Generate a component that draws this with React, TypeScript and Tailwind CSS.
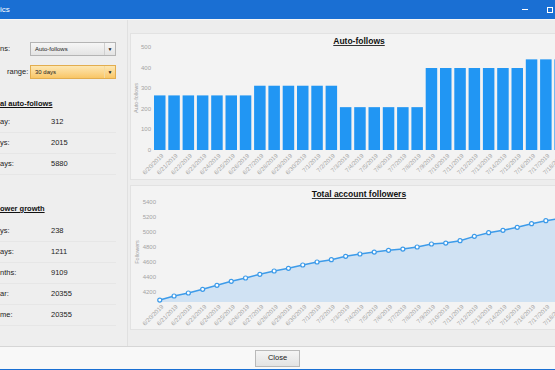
import React from "react";

const dates: string[] = [];
for (let d = 20; d <= 30; d++) dates.push(`6/${d}/2019`);
for (let d = 1; d <= 19; d++) dates.push(`7/${d}/2019`);

const autoFollows = [
  265, 265, 265, 265, 265, 265, 265, 312, 312, 312, 312, 312, 312, 208, 208, 208, 208, 208, 208, 398, 398, 398,
  398, 398, 398, 398, 440, 440, 440, 440,
];

const followers = [
  4093, 4147, 4187, 4236, 4289, 4343, 4387, 4436, 4480, 4516, 4560, 4600, 4631, 4676, 4707, 4733, 4756, 4773, 4800,
  4840, 4853, 4884, 4942, 4991, 5022, 5062, 5111, 5151, 5180, 5205,
];

const PITCH = 14.3;
const cx = (i: number) => 28.75 + i * PITCH;

function XLabels({ y }: { y: number }) {
  return (
    <g fill="#a3a3a3" fontSize="6">
      {dates.map((d, i) => (
        <text key={d} transform={`translate(${cx(i) + 3},${y}) rotate(-45)`} textAnchor="end" dominantBaseline="middle">
          {d}
        </text>
      ))}
    </g>
  );
}

function AutoFollowsChart() {
  const base = 116;
  const k = 0.206;
  return (
    <svg width="456" height="147" className="block font-['Liberation_Sans',Arial,sans-serif]">
      <text x="228" y="10" textAnchor="middle" fontSize="8.5" fontWeight="bold" fill="#111" textDecoration="underline">
        Auto-follows
      </text>
      <g fill="#a3a3a3" fontSize="6">
        {[0, 100, 200, 300, 400, 500].map((v) => (
          <text key={v} x="20" y={base - v * k} textAnchor="end" dominantBaseline="central">
            {v}
          </text>
        ))}
        <text transform="translate(7,64) rotate(-90)" textAnchor="middle" fontSize="5.5">
          Auto-follows
        </text>
      </g>
      {autoFollows.map((v, i) => (
        <rect key={i} x={23 + i * PITCH} y={base - v * k} width="11.5" height={v * k} fill="#2196f3" />
      ))}
      <XLabels y={121} />
    </svg>
  );
}

function FollowersChart() {
  const bottom = 116;
  const yOf = (v: number) => 106 - (v - 4200) * 0.075;
  const pts = followers.map((v, i) => `${cx(i)},${yOf(v)}`).join(" ");
  const area = `${pts} ${cx(followers.length - 1)},${bottom} ${cx(0)},${bottom}`;
  return (
    <svg width="456" height="145" className="block font-['Liberation_Sans',Arial,sans-serif]">
      <text x="228" y="11" textAnchor="middle" fontSize="8.5" fontWeight="bold" fill="#111" textDecoration="underline">
        Total account followers
      </text>
      <g fill="#a3a3a3" fontSize="6">
        {[4200, 4400, 4600, 4800, 5000, 5200, 5400].map((v) => (
          <text key={v} x="25" y={yOf(v)} textAnchor="end" dominantBaseline="central">
            {v}
          </text>
        ))}
        <text transform="translate(8,66) rotate(-90)" textAnchor="middle" fontSize="5.5">
          Followers
        </text>
      </g>
      <polygon points={area} fill="#d0e2f3" />
      <polyline points={pts} fill="none" stroke="#3d9be9" strokeWidth="1.5" />
      {followers.map((v, i) => (
        <circle key={i} cx={cx(i)} cy={yOf(v)} r="2" fill="#fff" stroke="#3d9be9" strokeWidth="1.2" />
      ))}
      <XLabels y={120} />
    </svg>
  );
}

function Arrow() {
  return <span className="text-[5px] leading-none text-[#222]">▼</span>;
}

function StatRow({ label, value }: { label: string; value: string }) {
  return (
    <div className="flex h-[21px] items-center border-b border-[#e6e6e6] text-[7.5px] text-[#222]">
      <span className="w-[51px]">{label}</span>
      <span>{value}</span>
    </div>
  );
}

export default function App() {
  return (
    <div className="flex h-[370px] w-[555px] flex-col overflow-hidden bg-[#ededed] font-['Liberation_Sans',Arial,sans-serif]">
      {/* title bar */}
      <div className="flex h-[19px] shrink-0 items-center bg-[#1a6fd3] text-white">
        <span className="text-[8px]">ics</span>
        <div className="ml-auto flex items-center gap-[19px] pr-[2px]">
          <div className="h-px w-[6px] bg-white" />
          <div className="h-[6px] w-[6px] border border-white" />
        </div>
      </div>
      <div className="h-px shrink-0 bg-[#f7f7f7]" />

      <div className="flex min-h-0 flex-1">
        {/* left stats */}
        <div className="flex w-[128px] shrink-0 flex-col border-r border-[#e0e0e0] bg-[#eeeeee] pt-[22px] pr-[11px]">
          <div className="flex h-[14px] items-center text-[7.5px] text-[#222]">
            <span className="w-[30px]">ns:</span>
            <div className="flex h-[14px] flex-1 items-stretch border border-[#b4b4b4] bg-gradient-to-b from-[#f6f6f6] to-[#e4e4e4]">
              <span className="flex-1 pl-[4px] text-[6px] leading-[12px]">Auto-follows</span>
              <div className="flex w-[11px] items-center justify-center border-l border-[#cfcfcf]">
                <Arrow />
              </div>
            </div>
          </div>
          <div className="mt-[9px] flex h-[14px] items-center text-[7.5px] text-[#222]">
            <span className="w-[30px] pl-[7px]">range:</span>
            <div className="flex h-[14px] flex-1 items-stretch border border-[#e2ad4f] bg-gradient-to-b from-[#fde7b2] to-[#f9c665]">
              <span className="flex-1 pl-[4px] text-[6px] leading-[12px]">30 days</span>
              <div className="flex w-[11px] items-center justify-center border-l border-[#f3d9a0]">
                <Arrow />
              </div>
            </div>
          </div>

          <div className="mt-[19px] h-[12px] text-[7.5px] leading-[12px] font-bold text-[#111] underline">al auto-follows</div>
          <div className="mt-[2px]">
            <StatRow label="ay:" value="312" />
            <StatRow label="ys:" value="2015" />
            <StatRow label="ays:" value="5880" />
          </div>

          <div className="mt-[28px] h-[12px] text-[7.5px] leading-[12px] font-bold text-[#111] underline">ower growth</div>
          <div className="mt-[6px]">
            <StatRow label="ys:" value="238" />
            <StatRow label="ays:" value="1211" />
            <StatRow label="nths:" value="9109" />
            <StatRow label="ar:" value="20355" />
            <StatRow label="me:" value="20355" />
          </div>
        </div>

        {/* charts */}
        <div className="flex flex-col gap-[5px] pt-[13px] pl-[2px]">
          <div className="h-[147px] w-[456px] shrink-0 border border-[#e2e2e2] bg-[#f3f3f3]">
            <AutoFollowsChart />
          </div>
          <div className="h-[145px] w-[456px] shrink-0 border border-[#e2e2e2] bg-[#f3f3f3]">
            <FollowersChart />
          </div>
        </div>
      </div>

      {/* footer */}
      <div className="flex h-[23px] shrink-0 items-center justify-center border-t border-[#d6d6d6] bg-[#f8f8f8]">
        <button className="h-[17px] w-[45px] border border-[#b9b9b9] bg-gradient-to-b from-[#f4f4f4] to-[#e3e3e3] text-[7.5px] text-[#222]">
          Close
        </button>
      </div>
      <div className="h-px shrink-0 bg-[#1a6fd3]" />
    </div>
  );
}
